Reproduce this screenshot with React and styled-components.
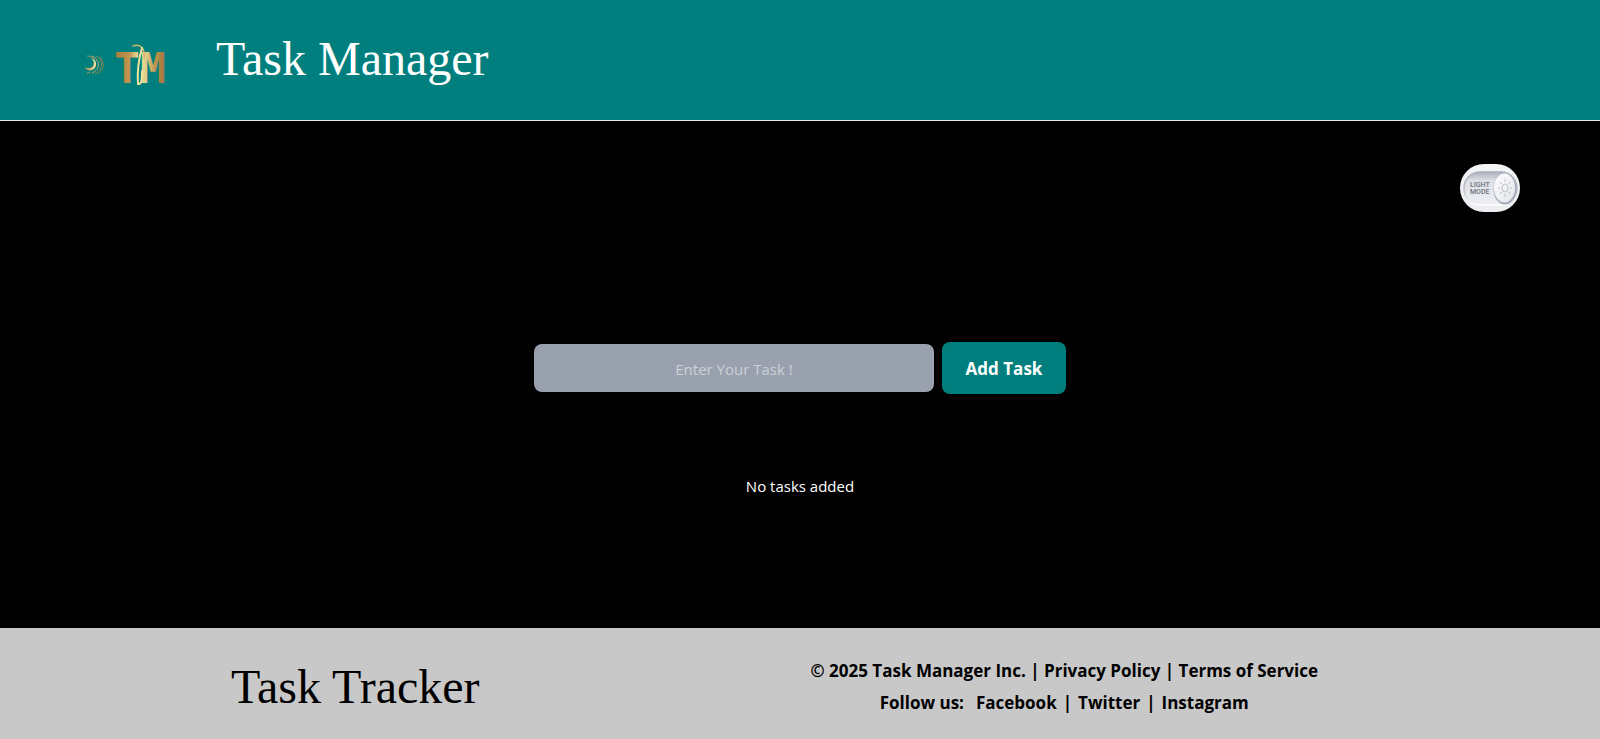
import React, { useState } from "react";
import styled, { createGlobalStyle } from "styled-components";

const GlobalStyle = createGlobalStyle`
  * { box-sizing: border-box; }
  body {
    margin: 0;
    background: #000;
    font-family: "Segoe UI", "Open Sans", "Noto Sans", sans-serif;
  }
`;

const Page = styled.div`
  display: flex;
  flex-direction: column;
  min-height: 100vh;
`;

const Header = styled.header`
  display: flex;
  align-items: center;
  gap: 40px;
  padding: 0 80px 2px;
  min-height: 121px;
  background: #007f7e;
  border-bottom: 1px solid #e5e7eb;
`;

const Logo = styled.svg`
  flex: none;
  width: 96px;
  height: 56px;
  margin-top: 12px;
`;

const Title = styled.h1`
  margin: 0;
  font-family: "Times New Roman", "Liberation Serif", serif;
  font-size: 48px;
  font-weight: 400;
  line-height: 48px;
  color: ${(p) => p.$color};
`;

const Main = styled.main`
  flex: 1;
  display: flex;
  flex-direction: column;
  align-items: center;
  padding: 43px 80px;
`;

const ModeButton = styled.button`
  align-self: flex-end;
  display: block;
  width: 60px;
  height: 48px;
  padding: 0;
  border: 0;
  border-radius: 24px;
  background: none;
  cursor: pointer;
`;

const TaskForm = styled.form`
  display: flex;
  align-items: center;
  gap: 8px;
  margin-top: 130px;
`;

const TaskInput = styled.input`
  width: 400px;
  height: 48px;
  padding: 2px 16px 0;
  border: 0;
  border-radius: 8px;
  background: #9aa1ae;
  color: #000;
  font: 400 15px "Segoe UI", "Open Sans", "Noto Sans", sans-serif;
  text-align: center;
  &::placeholder { color: #ccd0d6; opacity: 1; }
`;

const AddButton = styled.button`
  width: 124px;
  height: 52px;
  padding: 0;
  border: 0;
  border-radius: 8px;
  background: #007f7e;
  color: #fff;
  font: 700 17px "Segoe UI", "Open Sans", "Noto Sans", sans-serif;
  cursor: pointer;
`;

const TaskList = styled.div`
  margin-top: 80px;
  color: #fff;
  font-size: 15px;
  line-height: 24px;
`;

const Footer = styled.footer`
  display: flex;
  justify-content: space-between;
  align-items: center;
  min-height: 111px;
  padding: 6px 282px 0 231px;
  background: #c8c8c8;
`;

const FooterLinks = styled.div`
  text-align: center;
  font-size: 17px;
  font-weight: 700;
  line-height: 32px;
  color: #000;
`;

const FooterRow = styled.p`
  margin: 0;
  white-space: nowrap;
`;

const SocialRow = styled(FooterRow)`
  display: flex;
  justify-content: center;
  gap: 6px;
`;

const Lead = styled.span`
  margin-right: 6px;
`;

const Link = styled.a`
  color: inherit;
  text-decoration: none;
`;

function TmLogo() {
  return (
    <Logo viewBox="0 0 96 56" role="img" aria-label="TM logo">
      <defs>
        <linearGradient id="gold" gradientUnits="userSpaceOnUse" x1="35" x2="85" y1="0" y2="0">
          <stop offset="0" stopColor="#a87b3c" />
          <stop offset="0.3" stopColor="#c49650" />
          <stop offset="0.48" stopColor="#f1e6a0" />
          <stop offset="0.65" stopColor="#dcc680" />
          <stop offset="0.8" stopColor="#bf9650" />
          <stop offset="1" stopColor="#a0733a" />
        </linearGradient>
        <linearGradient id="moon" x1="0" x2="1">
          <stop offset="0" stopColor="#b68a45" />
          <stop offset="1" stopColor="#f5e6a0" />
        </linearGradient>
      </defs>
      <g transform="translate(2 0)">
        <path d="M9 21c4 3 4 9-1 10-3 .6-4 0-5-2 0 4 5 6 9 3 4-4 2-10-3-11z" fill="url(#moon)" />
        <g fill="none" strokeWidth="1">
          <path d="M5 19c13 0 12 17 0 17" stroke="#a6985a" strokeDasharray="7 18 9" />
          <path d="M10 19c9 4 8 14 0 17" stroke="#c3aa62" />
          <path d="M14 19c8 4 7 14-1 18" stroke="#8f8b52" />
          <path d="M17 20c6 4 6 13-1 17" stroke="#73834f" />
        </g>
      </g>
      <text
        x="34"
        y="46"
        fill="url(#gold)"
        fontFamily="'DejaVu Sans Mono', monospace"
        fontWeight="700"
        fontSize="43"
      >
        TM
      </text>
      <g fill="none" strokeLinecap="round">
        <path d="M53 9c8-3 12 3 11 12" stroke="#d3b66c" strokeWidth="1.5" />
        <path d="M62 11c-3 10-5 22-4 36 4 1 4-6 4-13" stroke="#eee29c" strokeWidth="2" />
      </g>
    </Logo>
  );
}

function LightSwitch() {
  return (
    <svg width="60" height="48" viewBox="0 0 60 48" aria-hidden="true">
      <defs>
        <linearGradient id="shell" x1="0" x2="0" y1="0" y2="1">
          <stop offset="0" stopColor="#f4f5f7" />
          <stop offset="1" stopColor="#eceef2" />
        </linearGradient>
        <linearGradient id="track" x1="0" x2="0" y1="0" y2="1">
          <stop offset="0" stopColor="#a9aebb" />
          <stop offset="0.25" stopColor="#dcdfe5" />
          <stop offset="1" stopColor="#eff0f4" />
        </linearGradient>
        <linearGradient id="edge" x1="0" x2="0" y1="0" y2="1">
          <stop offset="0" stopColor="#a9aebb" />
          <stop offset="0.6" stopColor="#c0c4ce" />
          <stop offset="1" stopColor="#ffffff" />
        </linearGradient>
        <linearGradient id="knob" x1="0" x2="1" y1="0" y2="1">
          <stop offset="0" stopColor="#fff" />
          <stop offset="1" stopColor="#e2e4ea" />
        </linearGradient>
      </defs>
      <rect width="60" height="48" rx="24" fill="url(#shell)" />
      <rect x="4" y="8" width="53" height="33" rx="16" fill="url(#track)" stroke="url(#edge)" strokeWidth="1.5" />
      <ellipse cx="45" cy="25" rx="11.5" ry="15.5" fill="#a3a9b6" />
      <ellipse cx="44.5" cy="24" rx="10.5" ry="14.5" fill="url(#knob)" />
      <g fill="none" stroke="#babdc4" strokeWidth="1">
        <ellipse cx="45" cy="24" rx="3" ry="4" />
        <path d="M45 15v3M45 30v3M38 24h2M50 24h2M40 18l1.5 2M50 18l-1.5 2M40 30l1.5-2M50 30l-1.5-2" />
      </g>
      <g fontFamily="Roboto, 'Liberation Sans', sans-serif" fontWeight="500" fontSize="7" fill="#6b7280">
        <text x="10" y="23">LIGHT</text>
        <text x="10" y="30">MODE</text>
      </g>
    </svg>
  );
}

export default function App() {
  const [draft, setDraft] = useState("");
  const [tasks, setTasks] = useState([]);
  const addTask = (event) => {
    event.preventDefault();
    if (draft.trim()) {
      setTasks([...tasks, draft.trim()]);
      setDraft("");
    }
  };
  return (
    <Page>
      <GlobalStyle />
      <Header>
        <TmLogo />
        <Title $color="#fff">Task Manager</Title>
      </Header>
      <Main>
        <ModeButton type="button" aria-label="Light mode">
          <LightSwitch />
        </ModeButton>
        <TaskForm onSubmit={addTask}>
          <TaskInput
            type="text"
            aria-label="Task"
            placeholder="Enter Your Task !"
            value={draft}
            onChange={(event) => setDraft(event.target.value)}
          />
          <AddButton type="submit">Add Task</AddButton>
        </TaskForm>
        <TaskList>
          {tasks.length === 0 ? "No tasks added" : tasks.map((task, i) => <div key={i}>{task}</div>)}
        </TaskList>
      </Main>
      <Footer>
        <Title as="h2" $color="#000">Task Tracker</Title>
        <FooterLinks>
          <FooterRow>
            © 2025 Task Manager Inc. | <Link href="#privacy">Privacy Policy</Link> |{" "}
            <Link href="#terms">Terms of Service</Link>
          </FooterRow>
          <SocialRow>
            <Lead>Follow us:</Lead>
            <Link href="#facebook">Facebook</Link>
            <span>|</span>
            <Link href="#twitter">Twitter</Link>
            <span>|</span>
            <Link href="#instagram">Instagram</Link>
          </SocialRow>
        </FooterLinks>
      </Footer>
    </Page>
  );
}
